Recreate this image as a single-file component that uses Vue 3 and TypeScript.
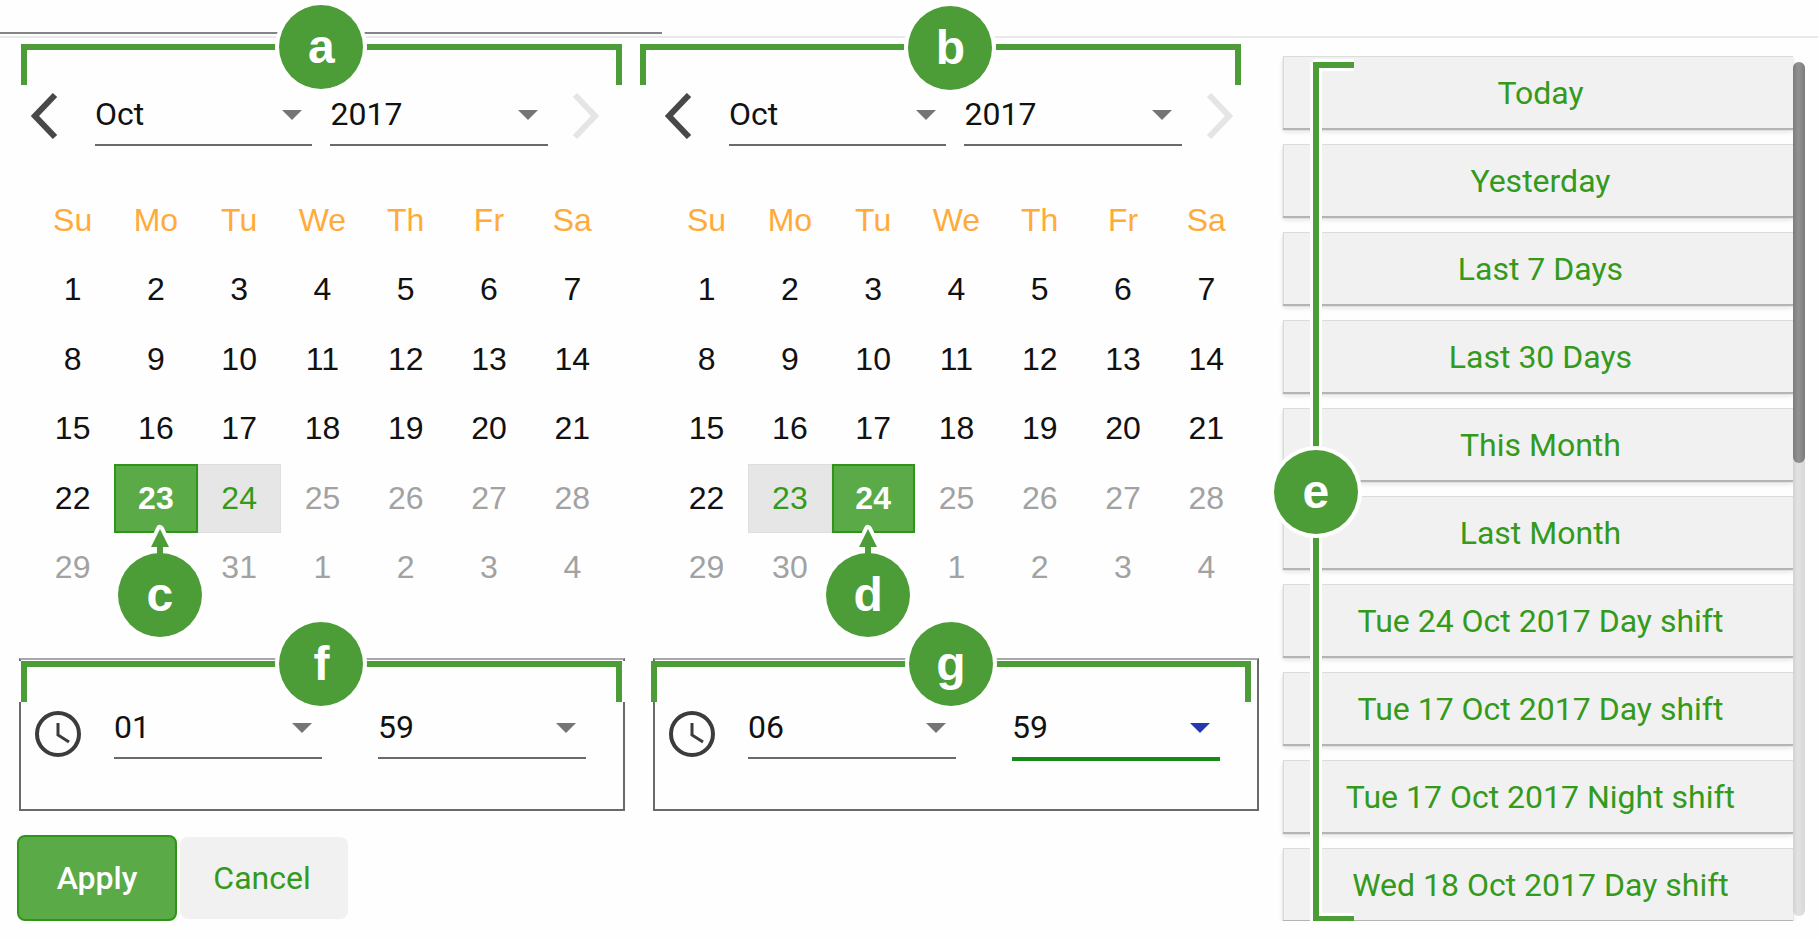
<script setup lang="ts">
import { ref } from 'vue'

interface Day {
  label: number
  outside: boolean
}

interface Panel {
  id: string
  badge: string
  timeBadge: string
  pointer: string
  selected: number
  ranged: number
  month: string
  year: string
  hour: string
  minute: string
}

const weekdays = ['Su', 'Mo', 'Tu', 'We', 'Th', 'Fr', 'Sa']
const months = ['Jan', 'Feb', 'Mar', 'Apr', 'May', 'Jun', 'Jul', 'Aug', 'Sep', 'Oct', 'Nov', 'Dec']
const years = ['2015', '2016', '2017']
const pad = (n: number): string => String(n).padStart(2, '0')
const hours = Array.from({ length: 12 }, (_, i) => pad(i + 1))
const minutes = Array.from({ length: 60 }, (_, i) => pad(i))
const today = 24

const weeks: Day[][] = Array.from({ length: 5 }, (_, w) =>
  Array.from({ length: 7 }, (_, d) => {
    const n = w * 7 + d + 1
    return { label: n > 31 ? n - 31 : n, outside: n > today }
  }),
)

const panels = ref<Panel[]>([
  { id: 'from', badge: 'a', timeBadge: 'f', pointer: 'c', selected: 23, ranged: 24, month: 'Oct', year: '2017', hour: '01', minute: '59' },
  { id: 'to', badge: 'b', timeBadge: 'g', pointer: 'd', selected: 24, ranged: 23, month: 'Oct', year: '2017', hour: '06', minute: '59' },
])

const presets = [
  'Today',
  'Yesterday',
  'Last 7 Days',
  'Last 30 Days',
  'This Month',
  'Last Month',
  'Tue 24 Oct 2017 Day shift',
  'Tue 17 Oct 2017 Day shift',
  'Tue 17 Oct 2017 Night shift',
  'Wed 18 Oct 2017 Day shift',
]

const dayClass = (day: Day, panel: Panel) => ({
  outside: day.outside,
  selected: day.label === panel.selected,
  ranged: day.label === panel.ranged,
})

// The pointer badge sits on the day one week below the selected one.
const isCovered = (day: Day, panel: Panel): boolean => day.label === panel.selected + 7
</script>

<template>
  <div class="page">
    <header class="strip"><div class="strip-line"></div></header>

    <main class="layout">
      <div class="pickers">
        <section v-for="p in panels" :key="p.id" class="panel" :class="p.id">
          <div class="nav">
            <button class="arrow" type="button" aria-label="Previous month">
              <svg width="28" height="46" viewBox="0 0 28 46"><path d="M24 2 4 23 24 44" fill="none" stroke="#484848" stroke-width="6" /></svg>
            </button>
            <div class="field">
              <select v-model="p.month" aria-label="Month">
                <option v-for="m in months" :key="m">{{ m }}</option>
              </select>
              <svg class="caret" width="20" height="10" viewBox="0 0 20 10"><path d="M0 0H20L10 10Z" /></svg>
            </div>
            <div class="field">
              <select v-model="p.year" aria-label="Year">
                <option v-for="y in years" :key="y">{{ y }}</option>
              </select>
              <svg class="caret" width="20" height="10" viewBox="0 0 20 10"><path d="M0 0H20L10 10Z" /></svg>
            </div>
            <button class="arrow next" type="button" aria-label="Next month" disabled>
              <svg width="28" height="46" viewBox="0 0 28 46"><path d="M4 2 24 23 4 44" fill="none" stroke="#e5e5e5" stroke-width="6" /></svg>
            </button>
          </div>

          <table class="calendar">
            <thead>
              <tr><th v-for="w in weekdays" :key="w" scope="col">{{ w }}</th></tr>
            </thead>
            <tbody>
              <tr v-for="(week, wi) in weeks" :key="wi">
                <td v-for="(day, di) in week" :key="di">
                  <button v-if="!isCovered(day, p)" class="day" type="button" :class="dayClass(day, p)">{{ day.label }}</button>
                  <div v-if="day.label === p.selected" class="pointer">
                    <svg class="pointer-arrow" width="30" height="36" viewBox="0 0 30 36">
                      <path d="M7 23 15 6 23 23" fill="none" stroke="#fff" stroke-width="8" stroke-linejoin="round" />
                      <path d="M15 6 24 24H18V36H12V24H6Z" fill="#4c9c37" />
                    </svg>
                    <span class="badge">{{ p.pointer }}</span>
                  </div>
                </td>
              </tr>
            </tbody>
          </table>

          <div class="bracket date-bracket"><span class="badge">{{ p.badge }}</span></div>
        </section>

        <section v-for="p in panels" :key="p.id + '-time'" class="time" :class="p.id">
          <svg class="clock" width="46" height="46" viewBox="0 0 46 46" fill="none" stroke="#3c3c3c">
            <circle cx="23" cy="23" r="21" stroke-width="4" />
            <path d="M23 12V24L34 31" stroke-width="3" />
          </svg>
          <div class="field">
            <select v-model="p.hour" aria-label="Hour">
              <option v-for="h in hours" :key="h">{{ h }}</option>
            </select>
            <svg class="caret" width="20" height="10" viewBox="0 0 20 10"><path d="M0 0H20L10 10Z" /></svg>
          </div>
          <div class="field" :class="{ active: p.id === 'to' }">
            <select v-model="p.minute" aria-label="Minute">
              <option v-for="m in minutes" :key="m">{{ m }}</option>
            </select>
            <svg class="caret" width="20" height="10" viewBox="0 0 20 10"><path d="M0 0H20L10 10Z" /></svg>
          </div>
          <div class="bracket time-bracket"><span class="badge">{{ p.timeBadge }}</span></div>
        </section>

        <div class="actions">
          <button class="apply" type="button">Apply</button>
          <button class="cancel" type="button">Cancel</button>
        </div>
      </div>

      <aside class="presets">
        <div class="preset-list">
          <button v-for="t in presets" :key="t" class="preset" type="button">{{ t }}</button>
        </div>
        <div class="scrollbar"><div class="thumb"></div></div>
        <div class="side-bracket"><span class="badge">e</span></div>
      </aside>
    </main>
  </div>
</template>

<style>
body {
  margin: 0;
  background: #fefefe;
}
</style>

<style scoped>
.page {
  font-family: Roboto, "Liberation Sans", sans-serif;
  font-size: 32px;
  color: #111;
}
.page * {
  box-sizing: border-box;
}
button,
select {
  font: inherit;
  color: inherit;
  margin: 0;
  padding: 0;
  border: 0;
  background: none;
}
.strip {
  display: flex;
  align-items: flex-end;
  height: 38px;
  padding-bottom: 2px;
  border-bottom: 2px solid #e9e9e9;
}
.strip-line {
  width: 36%;
  min-width: 662px;
  height: 2px;
  background: #858585;
}
.layout {
  display: grid;
  grid-template-columns: minmax(0, 19fr) minmax(0, 8fr);
  column-gap: 24px;
  padding: 0 13px 0 19px;
}
.pickers {
  display: grid;
  grid-template-columns: 1fr 1fr;
  column-gap: 28px;
  align-content: start;
}
.panel {
  position: relative;
  padding-top: 46px;
}

/* month and year row */
.nav {
  display: flex;
  align-items: flex-end;
  padding: 0 26px 0 12px;
}
.arrow {
  display: flex;
  align-items: center;
  height: 60px;
  margin-right: 36px;
}
.arrow.next {
  margin: 0 0 0 23px;
}
.field {
  position: relative;
  flex: 1;
  height: 62px;
  border-bottom: 2px solid #6a6a6a;
}
.field + .field {
  margin-left: 18px;
}
select {
  display: block;
  width: 100%;
  height: 60px;
  appearance: none;
  outline: none;
}
.caret {
  position: absolute;
  right: 10px;
  top: 26px;
  fill: #757575;
  pointer-events: none;
}
.active {
  border-bottom: 4px solid #15891a;
  margin-bottom: -2px;
  height: 64px;
}
.active .caret {
  fill: #2638ae;
}

/* calendar */
.calendar {
  width: calc(100% - 23px);
  margin: 39px 11px 0 12px;
  border-collapse: collapse;
  table-layout: fixed;
  font-family: "Liberation Sans", Arial, sans-serif;
}
th,
td {
  position: relative;
  height: 70px;
  padding: 0;
  text-align: center;
}
th {
  font-weight: 400;
  color: #ffab3a;
}
td {
  height: 69px;
}
tbody tr:nth-child(even) td {
  height: 70px;
}
.day {
  display: block;
  width: 100%;
  height: 69px;
}
.day.outside {
  color: #a2a2a2;
}
.day.ranged {
  background: #e6e6e6;
  border: 1px solid #dedede;
  color: #349a1c;
}
.day.selected {
  background: #5aaa47;
  border: 2px solid #2f9517;
  color: #fff;
  font-weight: 700;
}

/* annotations */
.badge {
  position: absolute;
  display: block;
  width: 84px;
  height: 84px;
  border-radius: 50%;
  background: #4c9c37;
  box-shadow: 0 0 0 4px #fff;
  color: #fff;
  font: 700 48px/84px "Liberation Sans", Arial, sans-serif;
  text-align: center;
}
.bracket {
  position: absolute;
  height: 41px;
  border: 6px solid #4c9c37;
  border-bottom: 0;
  pointer-events: none;
}
.bracket .badge {
  left: calc(50% - 42px);
  top: -45px;
}
.date-bracket {
  top: 6px;
  left: 2px;
  right: 3px;
}
.to .date-bracket {
  left: -13px;
  right: 18px;
}
.to .date-bracket .badge {
  left: calc(50% - 32px);
  top: -44px;
}
.time-bracket {
  top: 1px;
  left: 0;
  right: 1px;
  box-shadow: -3px 0 #fff, 3px 0 #fff;
}
.to .time-bracket {
  left: -4px;
  right: 6px;
}
.pointer {
  position: absolute;
  z-index: 2;
  top: 60px;
  left: calc(50% + 4px);
  width: 0;
}
.to .pointer {
  left: calc(50% - 5px);
}
.pointer .badge {
  top: 30px;
  left: -42px;
}
.pointer-arrow {
  position: absolute;
  z-index: 1;
  top: 0;
  left: -15px;
}

/* time boxes */
.time {
  position: relative;
  display: flex;
  align-items: flex-end;
  margin-top: 56px;
  padding: 37px 37px 50px 14px;
  border: 2px solid #6a6a6a;
  border-top-color: #a8a8a8;
}
.clock {
  margin: 0 33px 2px 0;
}
.time .field + .field {
  margin-left: 56px;
}

.actions {
  grid-column: 1 / -1;
  display: flex;
  align-items: center;
  gap: 3px;
  margin: 24px 0 0 -2px;
}
.apply {
  width: 160px;
  height: 86px;
  border: 2px solid #2f9517;
  border-radius: 8px;
  background: #5aaa47;
  color: #fff;
  font-weight: 500;
}
.cancel {
  width: 168px;
  height: 82px;
  padding-right: 4px;
  border-radius: 8px;
  background: #f1f1f1;
  color: #349a1c;
}

/* preset ranges */
.presets {
  position: relative;
  display: flex;
  align-self: start;
  padding-top: 18px;
}
.preset-list {
  flex: 1;
  display: flex;
  flex-direction: column;
  gap: 16px;
}
.preset {
  height: 72px;
  padding-left: 4px;
  background: #f1f1f1;
  border: solid #dcdcdc;
  border-width: 1px 0 0 1px;
  box-shadow: 0 2px 1px #b4b4b4, 0 4px 5px #e4e4e4;
  color: #349a1c;
}
.scrollbar {
  width: 12px;
  margin: 6px 0 4px;
  border-radius: 6px;
  background: linear-gradient(90deg, #d2d2d2, #e2e2e2 40%, #d8d8d8);
}
.thumb {
  height: 47%;
  border-radius: 6px;
  background: linear-gradient(90deg, #7c7c7c, #929292 45%, #7c7c7c);
}
.side-bracket {
  position: absolute;
  top: 24px;
  bottom: -2px;
  left: 30px;
  width: 41px;
  border: 6px solid #4c9c37;
  border-right: 0;
  box-shadow: -3px 0 #fff, 0 -3px #fff, 0 3px #fff, inset 3px 0 #fff, inset 0 3px #fff, inset 0 -3px #fff;
  pointer-events: none;
}
.side-bracket .badge {
  left: -45px;
  top: calc(50% - 42px);
}
</style>
